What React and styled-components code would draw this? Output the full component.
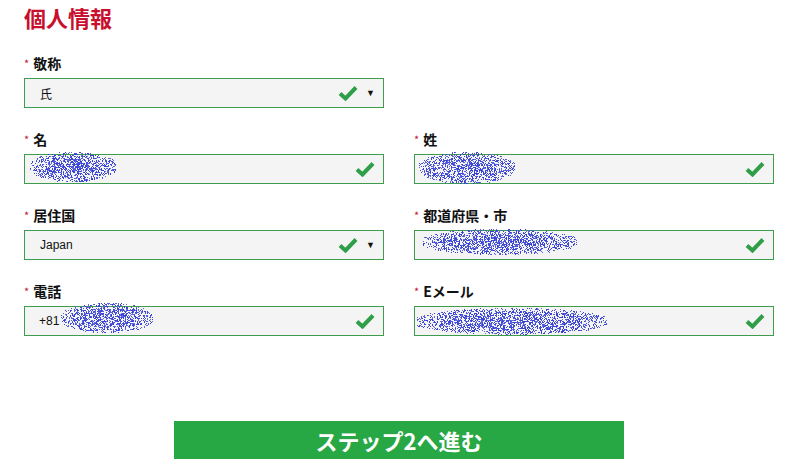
import React from "react";
import styled, { createGlobalStyle } from "styled-components";

const GlobalStyle = createGlobalStyle`
  body {
    margin: 0;
    background: #ffffff;
    font-family: "Liberation Sans", "Noto Sans CJK JP", sans-serif;
  }
`;

const Page = styled.div`
  width: 750px;
  padding: 4px 0 0 24px;
`;

const Title = styled.h1`
  margin: 0 0 24px;
  font-family: "Noto Sans CJK JP", sans-serif;
  font-size: 22px;
  line-height: 26px;
  font-weight: 700;
  color: #c8102e;
`;

const Grid = styled.div`
  display: grid;
  grid-template-columns: 360px 360px;
  column-gap: 30px;
  row-gap: 22px;
`;

const Field = styled.div`
  display: flex;
  flex-direction: column;
  gap: 7px;
`;

const Label = styled.label`
  display: flex;
  align-items: center;
  height: 17px;
  font-family: "Noto Sans CJK JP", sans-serif;
  font-size: 14px;
  font-weight: 700;
  color: #111;
`;

const Star = styled.span`
  color: #c8102e;
  font-size: 11px;
  margin-right: 4px;
  font-weight: 400;
`;

const Box = styled.div`
  position: relative;
  display: flex;
  align-items: center;
  height: 30px;
  box-sizing: border-box;
  border: 1px solid #3d9c4d;
  background: #f4f4f4;
  padding: 0 8px 0 ${(p) => (p.$select ? "15px" : "14px")};
  font-size: 12px;
  color: #111;
`;

const Value = styled.span`
  flex: 1;
  font-family: "Liberation Sans", "Noto Sans CJK JP", sans-serif;
`;

const Arrow = styled.span`
  font-size: 9px;
  margin-left: 8px;
  color: #111;
`;

const Blob = styled.svg`
  position: absolute;
  pointer-events: none;
`;

const Footer = styled.div`
  display: flex;
  justify-content: center;
  padding-top: 85px;
`;

const Button = styled.button`
  width: 450px;
  height: 38px;
  border: none;
  background: #28a745;
  color: #fff;
  font-family: "Noto Sans CJK JP", sans-serif;
  font-size: 22px;
  font-weight: 700;
  cursor: pointer;
`;

function Check() {
  return (
    <svg width="20" height="16" viewBox="0 0 20 16">
      <path d="M2 8.5 L7.5 13.5 L18 2.5" fill="none" stroke="#2f9e48" strokeWidth="4" />
    </svg>
  );
}

function rand(seed) {
  let s = seed;
  return () => {
    s = (s * 16807) % 2147483647;
    return s / 2147483647;
  };
}

function Scribble({ x, y, w, h, seed }) {
  const r = rand(seed);
  const dots = [];
  for (let i = 0; i < w * h * 0.9; i++) {
    const px = r() * w;
    const py = r() * h;
    const dx = (px - w / 2) / (w / 2);
    const dy = (py - h / 2) / (h / 2);
    const d = dx * dx * 0.9 + dy * dy;
    if (d > 1 || r() < d * 0.7) continue;
    dots.push(
      <rect key={i} x={Math.floor(px)} y={Math.floor(py)} width="1" height="1"
        fill={r() < 0.6 ? "#3a44d4" : "#5d66dc"} />
    );
  }
  return (
    <Blob width={w} height={h} style={{ left: x, top: y }}>
      {dots}
    </Blob>
  );
}

export default function App() {
  return (
    <>
      <GlobalStyle />
      <Page>
        <Title>個人情報</Title>
        <Grid>
          <Field>
            <Label><Star>*</Star>敬称</Label>
            <Box $select>
              <Value>氏</Value>
              <Check />
              <Arrow>▼</Arrow>
            </Box>
          </Field>
          <div />
          <Field>
            <Label><Star>*</Star>名</Label>
            <Box>
              <Value />
              <Scribble x={5} y={-3} w={86} h={30} seed={11} />
              <Check />
            </Box>
          </Field>
          <Field>
            <Label><Star>*</Star>姓</Label>
            <Box>
              <Value />
              <Scribble x={4} y={-3} w={96} h={32} seed={23} />
              <Check />
            </Box>
          </Field>
          <Field>
            <Label><Star>*</Star>居住国</Label>
            <Box $select>
              <Value>Japan</Value>
              <Check />
              <Arrow>▼</Arrow>
            </Box>
          </Field>
          <Field>
            <Label><Star>*</Star>都道府県・市</Label>
            <Box>
              <Value />
              <Scribble x={8} y={-2} w={154} h={26} seed={37} />
              <Check />
            </Box>
          </Field>
          <Field>
            <Label><Star>*</Star>電話</Label>
            <Box>
              <Value>+81</Value>
              <Scribble x={36} y={-4} w={92} h={30} seed={51} />
              <Check />
            </Box>
          </Field>
          <Field>
            <Label><Star>*</Star>Eメール</Label>
            <Box>
              <Value />
              <Scribble x={2} y={1} w={190} h={27} seed={67} />
              <Check />
            </Box>
          </Field>
        </Grid>
        <Footer>
          <Button>ステップ2へ進む</Button>
        </Footer>
      </Page>
    </>
  );
}
